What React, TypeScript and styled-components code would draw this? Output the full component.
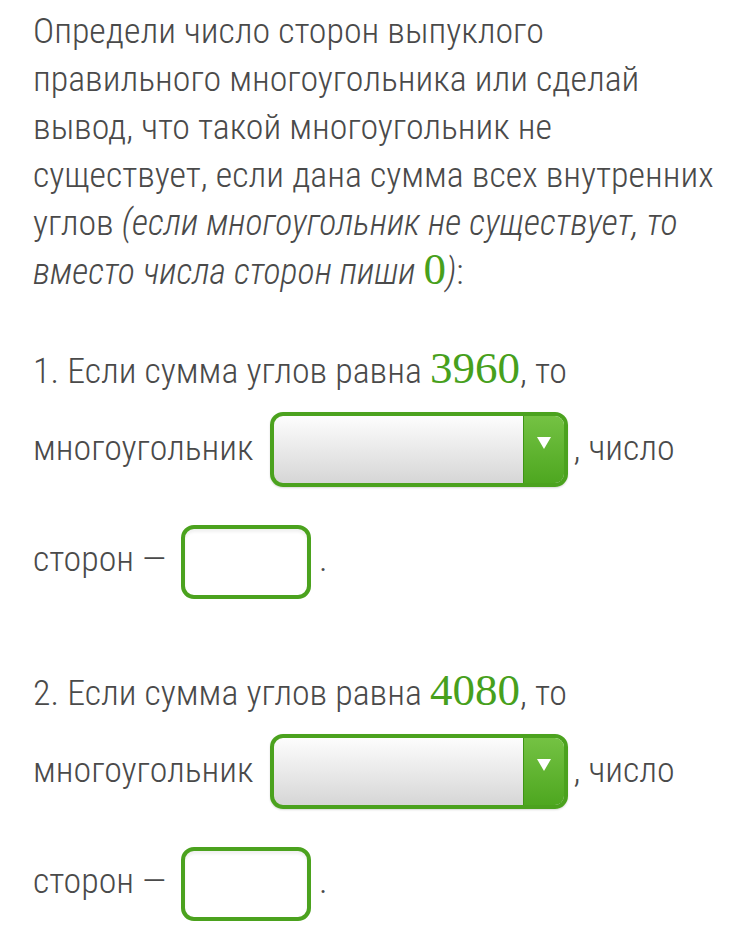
import React from 'react';
import styled, {createGlobalStyle} from 'styled-components';

const Global = createGlobalStyle`
  body {
    margin: 0;
    background: #fff;
  }
`;

const Page = styled.div`
  padding: 7px 20px 0 33px;
  font-family: Roboto, "Noto Sans", sans-serif;
  font-stretch: condensed;
  font-weight: 300;
  font-size: 35.9px;
  line-height: 48px;
  color: #4a4a4a;
`;

const Para = styled.p`
  margin: 0 0 50px;

  &:last-child {
    margin-bottom: 0;
  }
`;

const Hint = styled.em`
  font-style: italic;
`;

const Num = styled.span`
  font-family: "Liberation Serif", serif;
  font-stretch: normal;
  font-style: normal;
  font-weight: 400;
  font-size: 45px;
  line-height: 1;
  color: #47a01c;
`;

const Select = styled.span`
  display: inline-flex;
  vertical-align: middle;
  box-sizing: border-box;
  width: 298px;
  height: 75px;
  margin: 17px 0 19px;
  border: 4px solid #4ba21e;
  border-radius: 13px;
  overflow: hidden;
  background: linear-gradient(#fdfdfd, #d6d6d6);
  box-shadow: 0 1px 2px rgba(0, 0, 0, 0.15);
`;

const SelectField = styled.span`
  flex: 1;
`;

const SelectButton = styled.span`
  width: 41px;
  display: flex;
  justify-content: center;
  padding-top: 21px;
  box-sizing: border-box;
  background: linear-gradient(#74c243, #4ea720);
  border-left: 1px solid #3f9415;
`;

const Input = styled.span`
  display: inline-block;
  vertical-align: middle;
  box-sizing: border-box;
  width: 130px;
  height: 74px;
  margin: 19px 0;
  border: 4px solid #4ba21e;
  border-radius: 13px;
  background: #fff;
  box-shadow: inset 0 3px 3px rgba(0, 0, 0, 0.06);
`;

const Gap = styled.span<{ $w: number }>`
  display: inline-block;
  width: ${p => p.$w}px;
`;

const Arrow = () => (
  <svg width="14" height="12" viewBox="0 0 14 12">
    <polygon points="0,0 14,0 7,12" fill="#fff"/>
  </svg>
);

type ItemProps = {
  n: number
  sum: string
}

const Item = ({n, sum}: ItemProps) => (
  <Para>
    {n}. Если сумма углов равна <Num>{sum}</Num>, то
    <br/>
    многоугольник<Gap $w={16}/>
    <Select>
      <SelectField/>
      <SelectButton><Arrow/></SelectButton>
    </Select>
    <Gap $w={6}/>, число
    <br/>
    сторон —<Gap $w={15}/>
    <Input/>
    <Gap $w={8}/>.
  </Para>
);

export default function App() {
  return (
    <Page>
      <Global/>
      <Para>
        Определи число сторон выпуклого<br/>
        правильного многоугольника или сделай<br/>
        вывод, что такой многоугольник не<br/>
        существует, если дана сумма всех внутренних<br/>
        углов <Hint>(если многоугольник не существует, то<br/>
        вместо числа сторон пиши <Num>0</Num>)</Hint>:
      </Para>
      <Item n={1} sum="3960"/>
      <Item n={2} sum="4080"/>
    </Page>
  );
}
